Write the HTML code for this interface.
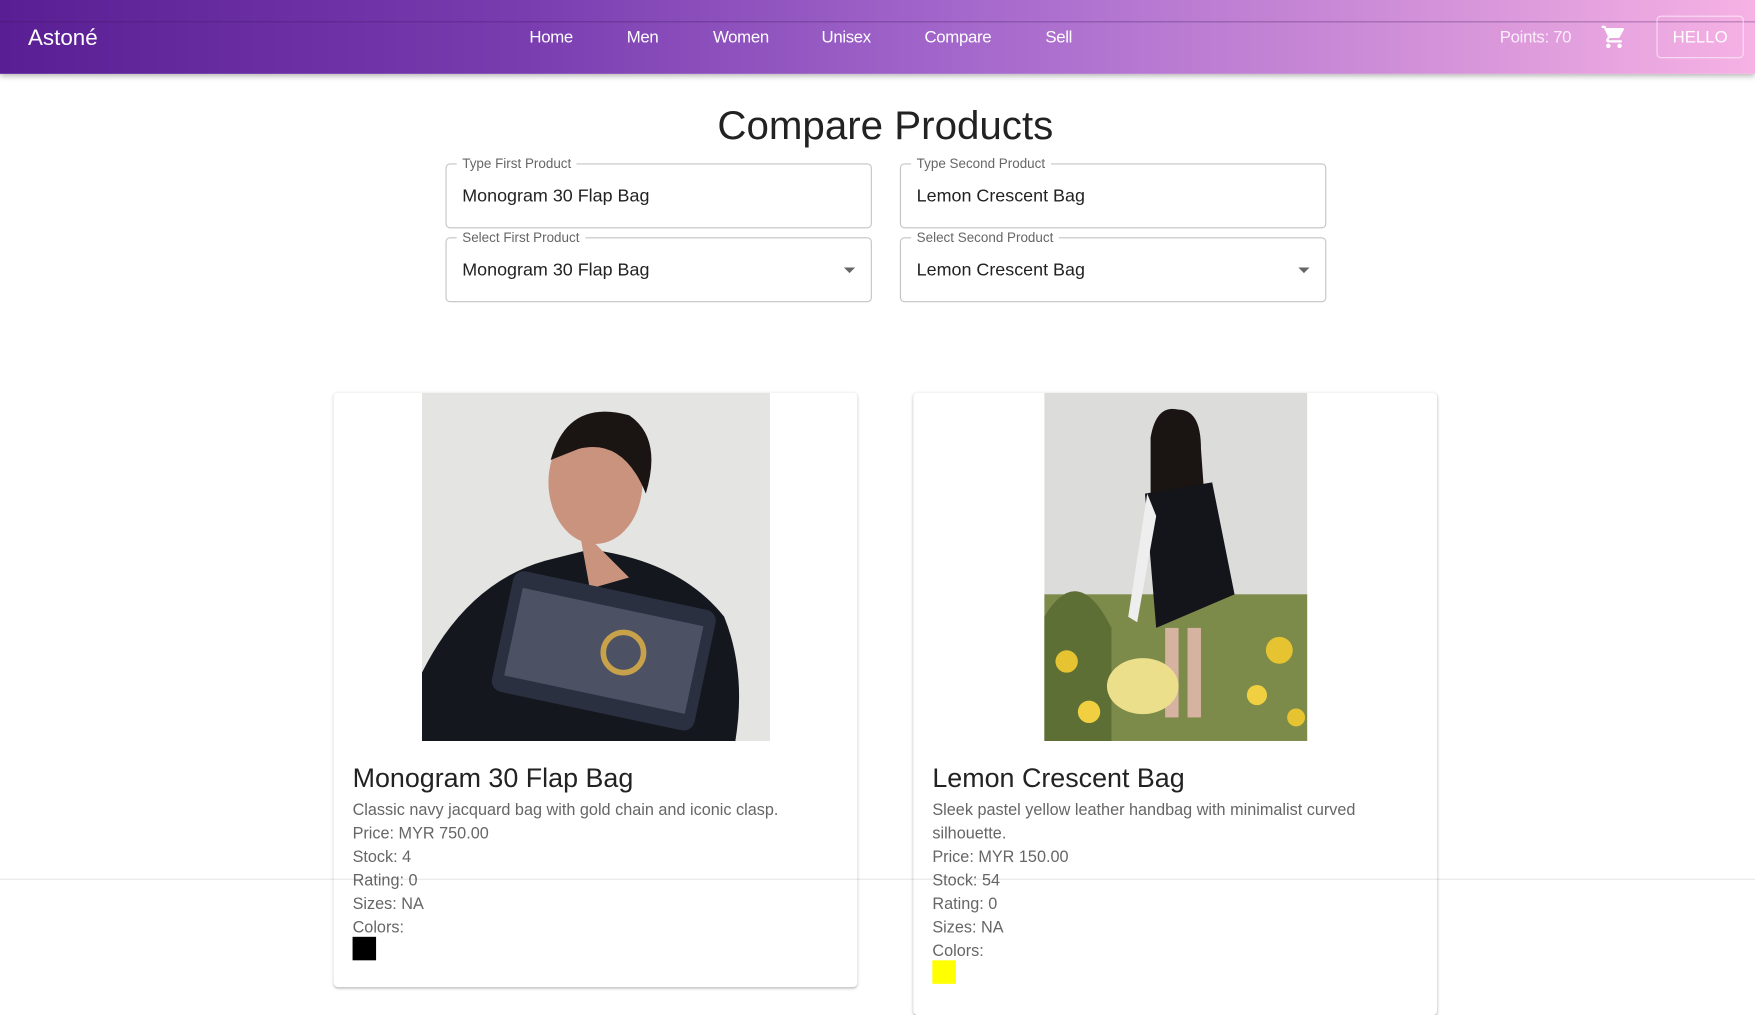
<!DOCTYPE html>
<html><head><meta charset="utf-8"><style>
html,body{margin:0;padding:0;width:1755px;height:1010px;overflow:hidden;background:#fff;font-family:"Liberation Sans",sans-serif}
#w{position:absolute;left:0;top:0;width:1568px;height:903px;transform:scale(1.11926);transform-origin:0 0}
.nav{position:absolute;left:0;top:0;width:1568px;height:66px;background:linear-gradient(90deg,#5a1e94 0%,#7a3db0 30%,#a468cc 55%,#d08fd8 80%,#f6b2e4 100%);box-shadow:0 2px 5px rgba(0,0,0,.3)}
.nav .ln{position:absolute;left:0;top:19px;width:100%;height:1px;background:rgba(60,20,90,.35)}
.t{position:absolute;white-space:nowrap}
.nl{color:#fff;font-size:15px;top:25px;letter-spacing:-0.3px}
.fld{position:absolute;width:379px;height:56px;border:1px solid #c4c4c4;border-radius:4px}
.lab{position:absolute;top:-8px;left:9px;background:#fff;padding:0 5px;font-size:12px;color:#666}
.val{position:absolute;left:14px;top:20px;font-size:16px;color:#222}
.arr{position:absolute;right:14px;top:26px;width:0;height:0;border-left:5px solid transparent;border-right:5px solid transparent;border-top:5px solid #666}
.card{position:absolute;width:468px;background:#fff;border-radius:4px;box-shadow:0 1px 3px rgba(0,0,0,.2),0 1px 1px rgba(0,0,0,.1)}
.ct{position:absolute;left:17px;top:331px;font-size:24px;color:#222}
.cd{position:absolute;left:17px;top:363px;font-size:14.5px;color:#666;line-height:21px;width:420px}
</style></head><body><div id="w">
<div class="nav"><div class="ln"></div>
<div class="t" style="left:25px;top:23px;font-size:20px;color:#fff">Astoné</div>
<div class="t nl" style="left:473px">Home</div>
<div class="t nl" style="left:560px">Men</div>
<div class="t nl" style="left:637px">Women</div>
<div class="t nl" style="left:734px">Unisex</div>
<div class="t nl" style="left:826px">Compare</div>
<div class="t nl" style="left:934px">Sell</div>
<div class="t nl" style="left:1340px;color:#fbeefa">Points: 70</div>
<svg style="position:absolute;left:1430px;top:21px" width="24" height="24" viewBox="0 0 24 24"><path fill="#fff" d="M7 18c-1.1 0-2 .9-2 2s.9 2 2 2 2-.9 2-2-.9-2-2-2zM1 2v2h2l3.6 7.59-1.35 2.45c-.16.28-.25.61-.25.96 0 1.1.9 2 2 2h12v-2H7.420c-.14 0-.25-.11-.25-.25l.03-.12.9-1.63h7.45c.75 0 1.41-.41 1.750-1.03l3.58-6.49A1 1 0 0 0 20 4H5.21l-.94-2H1zm16 16c-1.1 0-2 .9-2 2s.9 2 2 2 2-.9 2-2-.9-2-2-2z"/></svg>
<div style="position:absolute;left:1480px;top:14px;width:76px;height:36px;border:1px solid rgba(255,255,255,.6);border-radius:4px;color:#fff;font-size:15px;text-align:center;line-height:38px">HELLO</div>
</div>
<div class="t" style="left:0;width:1582px;text-align:center;top:91px;font-size:36px;color:#222">Compare Products</div>
<div class="fld" style="left:398px;top:146px"><span class="lab">Type First Product</span><span class="val">Monogram 30 Flap Bag</span></div>
<div class="fld" style="left:804px;top:146px"><span class="lab">Type Second Product</span><span class="val">Lemon Crescent Bag</span></div>
<div class="fld" style="left:398px;top:212px"><span class="lab">Select First Product</span><span class="val">Monogram 30 Flap Bag</span><span class="arr"></span></div>
<div class="fld" style="left:804px;top:212px"><span class="lab">Select Second Product</span><span class="val">Lemon Crescent Bag</span><span class="arr"></span></div>

<div class="card" style="left:298px;top:351px;height:531px">
<svg style="position:absolute;left:79px;top:0" width="311" height="311" viewBox="0 0 311 311">
<rect width="311" height="311" fill="#e4e4e2"/>
<path d="M0 311 L0 250 Q40 170 110 150 L150 140 Q230 150 270 200 Q290 250 280 311Z" fill="#15171f"/>
<ellipse cx="155" cy="80" rx="42" ry="55" fill="#c9937e"/>
<path d="M115 60 Q130 5 185 20 Q215 40 200 90 Q180 40 140 50Z" fill="#1a1412"/>
<path d="M140 120 L185 165 L150 175Z" fill="#c9937e"/>
<rect x="70" y="175" width="185" height="110" rx="10" fill="#2b3040" transform="rotate(12 160 230)"/>
<rect x="80" y="190" width="165" height="80" fill="#6d7488" opacity=".5" transform="rotate(12 160 230)"/>
<circle cx="180" cy="232" r="18" fill="none" stroke="#c8a24a" stroke-width="5"/>
</svg>
<div class="ct">Monogram 30 Flap Bag</div>
<div class="cd">Classic navy jacquard bag with gold chain and iconic clasp.<br>Price: MYR 750.00<br>Stock: 4<br>Rating: 0<br>Sizes: NA<br>Colors:</div>
<div style="position:absolute;left:17px;top:486px;width:21px;height:21px;background:#000"></div>
</div>

<div class="card" style="left:816px;top:351px;height:556px">
<svg style="position:absolute;left:117px;top:0" width="235" height="311" viewBox="0 0 235 311">
<rect width="235" height="311" fill="#dcdcda"/>
<rect y="180" width="235" height="131" fill="#7c8a4a"/>
<path d="M0 200 Q30 150 60 210 L60 311 L0 311Z" fill="#5d6f35"/>
<circle cx="20" cy="240" r="10" fill="#e6c431"/><circle cx="210" cy="230" r="12" fill="#e6c431"/><circle cx="190" cy="270" r="9" fill="#f0d040"/><circle cx="40" cy="285" r="10" fill="#f0d040"/><circle cx="225" cy="290" r="8" fill="#e6c431"/>
<ellipse cx="117" cy="40" rx="16" ry="20" fill="#e0c0ae"/>
<path d="M95 40 Q100 10 120 15 Q140 15 140 50 L145 120 L95 110Z" fill="#1a1412"/>
<path d="M90 90 L150 80 L170 180 L100 210 Z" fill="#14151a"/>
<path d="M92 90 L75 200 L83 205 L100 110Z" fill="#eee"/>
<rect x="108" y="210" width="12" height="80" fill="#d6b3a0"/><rect x="128" y="210" width="12" height="80" fill="#d6b3a0"/>
<ellipse cx="88" cy="262" rx="32" ry="25" fill="#ecdf8c"/>
</svg>
<div class="ct">Lemon Crescent Bag</div>
<div class="cd">Sleek pastel yellow leather handbag with minimalist curved silhouette.<br>Price: MYR 150.00<br>Stock: 54<br>Rating: 0<br>Sizes: NA<br>Colors:</div>
<div style="position:absolute;left:17px;top:507px;width:21px;height:21px;background:#ffff00"></div>
</div>
<div style="position:absolute;left:0;top:785px;width:1568px;height:1px;background:rgba(0,0,0,.1)"></div>
</div></body></html>
